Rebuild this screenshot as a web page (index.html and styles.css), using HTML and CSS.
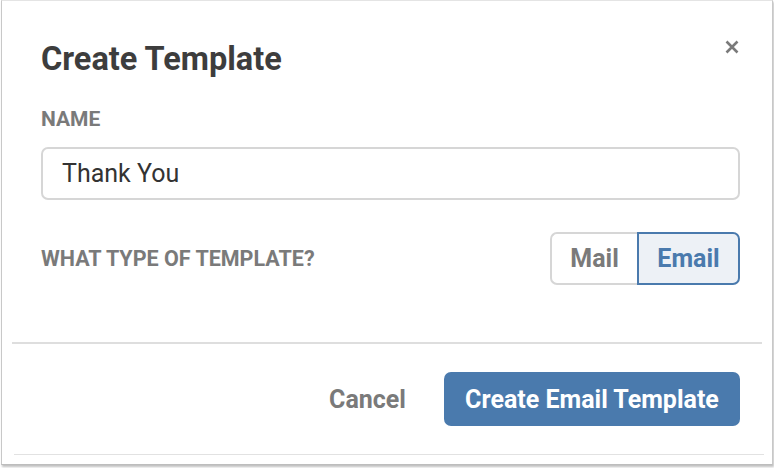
FILE: index.html
```html
<!DOCTYPE html>
<html>
<head>
<meta charset="utf-8">
<link rel="stylesheet" href="styles.css">
</head>
<body>
<div class="frame">
  <div class="dialog">
    <div class="body">
      <div class="header">
        <h1 class="title">Create Template</h1>
        <button class="close" aria-label="Close">
          <svg width="14" height="14" viewBox="0 0 14 14"><path d="M1.5 1.5 L12.5 12.5 M12.5 1.5 L1.5 12.5" stroke="#7a7a7a" stroke-width="2.6" stroke-linecap="butt"/></svg>
        </button>
      </div>
      <div class="label">NAME</div>
      <div class="input">Thank You</div>
      <div class="type-row">
        <div class="label type-label">WHAT TYPE OF TEMPLATE?</div>
        <div class="toggle">
          <div class="opt">Mail</div>
          <div class="opt active">Email</div>
        </div>
      </div>
    </div>
    <div class="divider"></div>
    <div class="footer">
      <div class="cancel">Cancel</div>
      <div class="primary">Create Email Template</div>
    </div>
    <div class="bottom-line"></div>
  </div>
</div>
</body>
</html>
```

FILE: styles.css
```css
html, body {
  margin: 0;
  padding: 0;
  background: #ffffff;
}
body {
  font-family: Roboto, "Liberation Sans", sans-serif;
  width: 774px;
  height: 468px;
  overflow: hidden;
}
.frame {
  box-sizing: border-box;
  margin-left: 1px;
  width: 772px;
  height: 465px;
  border-top: 1px solid #e4e4e4;
  border-left: 1px solid #c8c8c8;
  border-right: 1px solid #c8c8c8;
  border-bottom: 1px solid #bdbdbd;
  box-shadow: 1px 2px 2px rgba(0,0,0,0.25);
  background: #fff;
}
.dialog {
  display: flex;
  flex-direction: column;
  height: 100%;
  padding: 0 10px 0 10px;
}
.body {
  padding: 0 22px 0 29px;
}
.header {
  display: flex;
  justify-content: space-between;
  align-items: flex-start;
  padding-top: 37px;
}
.title {
  margin: 0;
  font-size: 32.5px;
  font-weight: 700;
  color: #3d3d3d;
  line-height: 42px;
}
.close {
  border: 0;
  background: none;
  padding: 0;
  margin: 2px 1px 0 0;
  width: 14px;
  height: 14px;
  display: flex;
}
.label {
  font-size: 21px;
  font-weight: 700;
  color: #7a7a7a;
  line-height: 24px;
  margin-top: 27px;
}
.input {
  box-sizing: border-box;
  margin-top: 16px;
  height: 53px;
  border: 2px solid #d6d6d6;
  border-radius: 7px;
  padding: 0 19px;
  font-size: 25px;
  color: #333;
  display: flex;
  align-items: center;
}
.type-row {
  display: flex;
  justify-content: space-between;
  align-items: center;
  margin-top: 32px;
}
.type-label {
  margin-top: 0;
  font-size: 21.5px;
}
.toggle {
  display: flex;
  height: 53px;
  box-sizing: border-box;
}
.opt {
  box-sizing: border-box;
  display: flex;
  align-items: center;
  justify-content: center;
  font-size: 25px;
  font-weight: 700;
  color: #7a7a7a;
  border: 2px solid #d6d6d6;
  width: 87px;
  border-radius: 7px 0 0 7px;
  border-right: 0;
}
.opt.active {
  width: 103px;
  border: 2px solid #4a7aad;
  background: #edf1f6;
  color: #4a7aad;
  border-radius: 0 7px 7px 0;
}
.divider {
  height: 2px;
  background: #dedede;
  margin-top: 57px;
}
.footer {
  display: flex;
  justify-content: flex-end;
  align-items: center;
  gap: 38px;
  padding: 28px 22px 0 0;
}
.cancel {
  font-size: 25px;
  font-weight: 700;
  color: #7a7a7a;
}
.primary {
  box-sizing: border-box;
  height: 54px;
  width: 296px;
  background: #4a7aad;
  border-radius: 7px;
  color: #fff;
  font-size: 25px;
  font-weight: 700;
  display: flex;
  align-items: center;
  justify-content: center;
}
.bottom-line {
  height: 1px;
  background: #e2e2e2;
  margin-top: 28px;
  margin-left: 2px;
  margin-right: -2px;
}
```
